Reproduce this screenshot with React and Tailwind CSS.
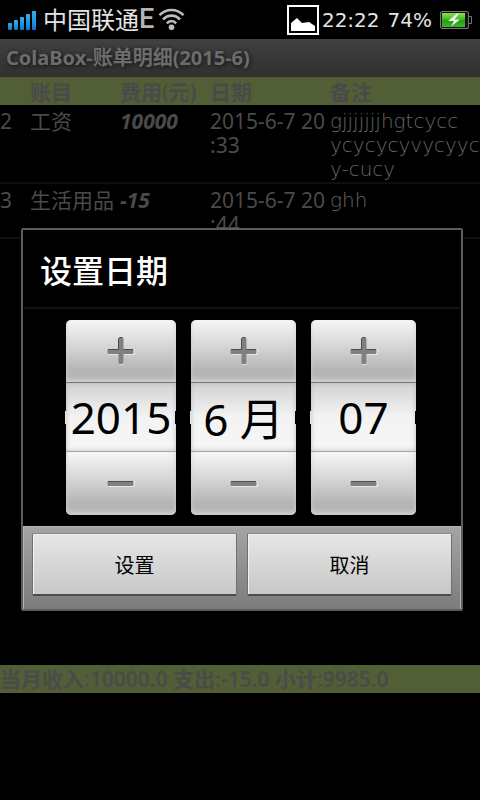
import { useState } from "react";

const entries = [
  { id: 2, account: "工资", amount: "10000", date: ["2015-6-7 20", ":33"], note: ["gjjjjjjjhgtcycc", "ycycycyvycyyc", "y-cucy"] },
  { id: 3, account: "生活用品", amount: "-15", date: ["2015-6-7 20", ":44"], note: ["ghh"] },
];

function StatusBar() {
  return (
    <header className="flex h-[39px] shrink-0 items-center bg-black pl-2 pr-2 text-[20px] leading-none text-[#e4e4e4]">
      <svg width="28" height="20" viewBox="0 0 28 20" aria-hidden="true">
        <defs>
          <linearGradient id="signal" x1="0" y1="0" x2="0" y2="1">
            <stop offset="0" stopColor="#2fb4f2" />
            <stop offset="1" stopColor="#0f76d2" />
          </linearGradient>
        </defs>
        <g fill="url(#signal)">
          <rect x="0" y="13" width="4" height="7" rx="1" />
          <rect x="6" y="10" width="4" height="10" rx="1" />
          <rect x="12" y="7" width="4" height="13" rx="1" />
          <rect x="18" y="4" width="4" height="16" rx="1" />
          <rect x="24" y="1" width="4" height="19" rx="1" />
        </g>
      </svg>
      <span className="ml-[7px] text-[24px] font-normal">中国联通</span>
      <span className="font-['Roboto',sans-serif] text-[27px] font-medium text-[#b4b4b4]">E</span>
      <svg className="ml-1" width="27" height="23" viewBox="0 0 27 23" aria-label="Wi-Fi">
        <g fill="none" stroke="#bcbcbc" strokeWidth="2.6">
          <path d="M1.5 7.2C8 .2 19 .2 25.500 7.200" />
          <path d="M5 11.500C9.800 6.300 17.200 6.300 22 11.500" />
          <path d="M8.800 15.300C11.500 12.300 15.500 12.300 18.200 15.300" />
        </g>
        <circle cx="13.5" cy="19.300" r="2.8" fill="#bcbcbc" />
      </svg>
      <svg className="ml-auto" width="32" height="30" viewBox="0 0 32 30" aria-label="Screenshot">
        <rect x="1" y="1" width="30" height="28" fill="none" stroke="#fff" strokeWidth="2" />
        <path d="M4 26V18L10 13L15 18L22 17L28 21V26Z" fill="#fff" />
      </svg>
      <span className="ml-[3px] font-['DejaVu_Sans',sans-serif]">22:22</span>
      <span className="ml-2 font-['DejaVu_Sans',sans-serif]">74%</span>
      <svg className="ml-2" width="32" height="18" viewBox="0 0 32 18" aria-label="Charging">
        <defs>
          <linearGradient id="charge" x1="0" y1="0" x2="0" y2="1">
            <stop offset="0" stopColor="#8be04e" />
            <stop offset=".45" stopColor="#45bd25" />
            <stop offset=".5" stopColor="#239e12" />
            <stop offset="1" stopColor="#3fb82a" />
          </linearGradient>
        </defs>
        <rect x=".5" y=".5" width="28" height="17" rx="1.5" fill="#111" stroke="#777" />
        <path d="M28.500 5.500H31.500V12.500H28.500" fill="none" stroke="#777" />
        <rect x="2" y="2" width="23" height="14" fill="url(#charge)" />
        <path d="M17 2.500L8 10H14L11 15.500L20 8.500H14.500L19 2.500Z" fill="#f1f1f1" />
      </svg>
    </header>
  );
}

function Ledger() {
  return (
    <table className="w-full table-fixed border-collapse text-left text-[21px] leading-6 text-[#4a4a4a]">
      <colgroup>
        <col className="w-[30px]" />
        <col className="w-[90px]" />
        <col className="w-[90px]" />
        <col className="w-[120px]" />
        <col />
      </colgroup>
      <thead>
        <tr className="h-7 whitespace-nowrap bg-[#525e35] text-[21px]">
          <th className="p-0" aria-label="编号" />
          <th className="px-0 pb-0 pt-[2px] font-semibold" scope="col">账目</th>
          <th className="px-0 pb-0 pt-[2px] font-semibold" scope="col">费用(元)</th>
          <th className="px-0 pb-0 pt-[2px] font-semibold" scope="col">日期</th>
          <th className="px-0 pb-0 pt-[2px] font-semibold" scope="col">备注</th>
        </tr>
      </thead>
      <tbody>
        {entries.map((e) => (
          <tr key={e.id} className="whitespace-nowrap border-b-2 border-[#0e0e0e] align-top">
            <td className="px-0 pb-px pt-1">{e.id}</td>
            <td className="px-0 pb-px pt-1">{e.account}</td>
            <td className="px-0 pb-px pt-1 font-bold italic">{e.amount}</td>
            <td className="px-0 pb-px pt-1">
              {e.date.map((line) => <div key={line}>{line}</div>)}
            </td>
            <td className="px-0 pb-px pt-1 font-['DejaVu_Sans',sans-serif] text-[20px] font-extralight text-[#666]">
              {e.note.map((line) => <div key={line}>{line}</div>)}
            </td>
          </tr>
        ))}
      </tbody>
    </table>
  );
}

function StepIcon({ plus }) {
  return (
    <svg width="28" height="28" viewBox="0 0 28 28" aria-hidden="true">
      <rect x="1" y="12" width="27" height="6" rx="1.5" fill="#e4e4e4" />
      {plus && <rect x="12" y="1" width="5" height="27" rx="1.5" fill="#dcdcdc" />}
      <rect x=".5" y="12" width="26" height="5" rx="1.5" fill="#808080" />
      {plus && <rect x="11.5" y=".5" width="5" height="26.5" rx="1.5" fill="#808080" />}
      <path d={plus ? "M1 12.500H11.500V1.500L12.500 .5H15.500M16.500 12.500H26" : "M1 12.500H26"} fill="none" stroke="#4c4c4c" />
    </svg>
  );
}

const stepClass =
  "flex w-full items-center justify-center bg-linear-to-b from-[#f6f6f6] via-[#d4d4d4] via-45% to-[#b5b5b5] to-80% shadow-[inset_0_-3px_4px_#cfcfcf]";

function Picker({ label, value, onChange, width }) {
  return (
    <div className={"relative flex flex-col " + width}>
      <button type="button" aria-label={label + " +"} className={stepClass + " h-[62px] rounded-t-[5px]"}>
        <StepIcon plus />
      </button>
      <input
        aria-label={label}
        value={value}
        onChange={(e) => onChange(e.target.value)}
        className="h-[70px] w-full border-y border-t-[#777] border-b-[#a8a8a8] bg-linear-to-b from-[#d2d2d2] via-[#f3f3f3] via-50% to-[#f6f6f6] p-0 text-center text-[44px] font-normal leading-none text-black shadow-[inset_0_0_5px_#bbb] outline-none"
      />
      <span className="absolute -left-px top-[91px] h-[13px] w-px bg-[#e8e8e8]" />
      <span className="absolute right-0 top-[91px] h-[13px] w-px bg-black" />
      <button type="button" aria-label={label + " -"} className={stepClass + " h-[63px] rounded-b-[5px]"}>
        <StepIcon />
      </button>
    </div>
  );
}

const actionClass =
  "h-[63px] flex-1 rounded-[2px] border border-[#707070] border-t-[#8a8a8a] border-b-2 border-b-[#4d4d4d] bg-linear-to-b from-[#e6e6e6] to-[#c8c8c8] pt-1 text-[20px] font-normal text-black shadow-[inset_1px_1px_0_#f1f1f1]";

function DateDialog() {
  const [year, setYear] = useState("2015");
  const [month, setMonth] = useState("6 月");
  const [day, setDay] = useState("07");
  return (
    <section role="dialog" aria-labelledby="dialog-title" className="w-full rounded-[2px] border-2 border-[#5c5c5c] bg-black">
      <h2 id="dialog-title" className="mx-px flex h-[79px] items-center border-b-2 border-[#141414] px-4 pb-0 pt-[6px] text-[32px] font-medium text-white">
        设置日期
      </h2>
      <div className="flex justify-center gap-[15px] pb-[11px] pr-[2px] pt-[11px]">
        <Picker label="年" value={year} onChange={setYear} width="w-[110px]" />
        <Picker label="月" value={month} onChange={setMonth} width="w-[105px]" />
        <Picker label="日" value={day} onChange={setDay} width="w-[105px]" />
      </div>
      <div className="flex gap-[10px] border-x border-t border-[#b4b4b4] bg-linear-to-b from-[#a4a4a4] to-[#7c7c7c] px-2 pb-[13px] pt-[6px]">
        <button type="button" className={actionClass}>设置</button>
        <button type="button" className={actionClass}>取消</button>
      </div>
    </section>
  );
}

export default function App() {
  return (
    <div className="flex min-h-screen flex-col bg-black font-['Noto_Sans','Noto_Sans_CJK_SC',sans-serif]">
      <StatusBar />
      <div className="relative flex flex-1 flex-col">
        <h1 className="flex h-[38px] shrink-0 items-center bg-linear-to-b from-[#414141] to-[#303030] px-[6px] text-[20px] font-bold text-[#6c6c6c] [text-shadow:1px_1px_4px_#111]">
          ColaBox-账单明细(2015-6)
        </h1>
        <main className="flex-1">
          <Ledger />
        </main>
        <footer className="mb-[107px] flex h-7 shrink-0 items-center whitespace-nowrap bg-[#525e35] pt-[2px] text-[21px] font-semibold text-[#4a4a4a]">
          当月收入:10000.0 支出:-15.0 小计:9985.0
        </footer>
        <div className="absolute inset-0 flex items-center pb-px pl-[21px] pr-[17px]">
          <DateDialog />
        </div>
      </div>
    </div>
  );
}
